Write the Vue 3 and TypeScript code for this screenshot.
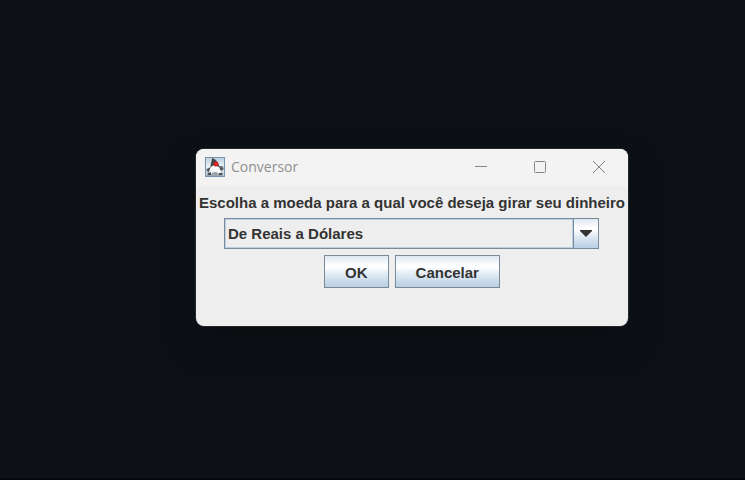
<script setup lang="ts">
import { ref } from 'vue'

const options: string[] = ['De Reais a Dólares']
const selected = ref<string>(options[0])
</script>

<template>
  <main class="desktop">
    <section class="window" role="dialog" aria-labelledby="window-title">
      <header class="titlebar">
        <svg class="app-icon" viewBox="0 0 20 20" aria-hidden="true">
          <defs>
            <linearGradient id="icon-sky" x1="0" y1="0" x2="0" y2="1">
              <stop offset="0" stop-color="#b9cfdf" />
              <stop offset="0.5" stop-color="#f0f4f7" />
              <stop offset="1" stop-color="#b4c5d2" />
            </linearGradient>
          </defs>
          <rect x="0.5" y="0.5" width="19" height="19" fill="url(#icon-sky)" stroke="#7895ad" />
          <path d="M2 16q8-3 16 0v3H2z" fill="#9aa6af" />
          <path d="M6 10l-3 1-2 2 2 2 3-1zM14 9l4 0 1 3-2 2-3-1z" fill="#7d868d" />
          <path d="M2 12l3-1 1 2-3 2zM15 10l3 1-1 2-2 0z" fill="#4c5257" />
          <path d="M7 1q4 1 6 5 2 4 2 6l-4-2-5 1q-1-2 0-5 1-3 1-5z" fill="#42474b" />
          <path d="M7 9l3-1 4 2q2 3 2 7-2 1-3-1-3-2-6 0-1 2-3 1 0-5 3-8z" fill="#f8f9fa" />
          <path d="M3 16l3-1 0 3H3zM14 16l3 0v2h-3z" fill="#4a5157" />
          <circle cx="11" cy="7" r="2.5" fill="#c9202a" />
          <circle cx="11" cy="7" r="1.5" fill="#f02a2a" />
        </svg>
        <h1 id="window-title" class="title">Conversor</h1>
        <div class="controls">
          <button type="button" class="control" aria-label="Minimizar">
            <svg viewBox="0 0 12 12"><path d="M0 5.5H12" /></svg>
          </button>
          <button type="button" class="control" aria-label="Maximizar">
            <svg viewBox="0 0 12 12"><rect x="0.5" y="0.5" width="11" height="11" rx="1" /></svg>
          </button>
          <button type="button" class="control" aria-label="Fechar">
            <svg viewBox="0 0 12 12"><path d="M0 0L12 12M12 0L0 12" /></svg>
          </button>
        </div>
      </header>
      <form class="content" @submit.prevent>
        <label class="message" for="currency">Escolha a moeda para a qual você deseja girar seu dinheiro</label>
        <div class="combo">
          <select id="currency" v-model="selected" class="select">
            <option v-for="option in options" :key="option" :value="option">{{ option }}</option>
          </select>
          <span class="arrow" aria-hidden="true">
            <svg viewBox="0 0 12 7"><path d="M0 0H12V1L6 7L0 1Z" /></svg>
          </span>
        </div>
        <div class="actions">
          <button type="submit" class="button">OK</button>
          <button type="button" class="button">Cancelar</button>
        </div>
      </form>
    </section>
  </main>
</template>

<style>
body {
  background: #0d1017;
}
</style>

<style scoped>
.desktop {
  position: relative;
  box-sizing: border-box;
  min-height: 100vh;
  background: #0d1017;
  border-bottom: 2px solid #08060d;
  overflow: hidden;
}

.window {
  position: absolute;
  left: 196px;
  top: 149px;
  border-radius: 8px;
  background: #eeeeee;
  box-shadow: 0 0 0 1px #25262b, 0 16px 32px rgba(10, 14, 15, 0.8);
  overflow: hidden;
}

.titlebar {
  display: flex;
  align-items: center;
  height: 36px;
  padding: 0 0 1px 9px;
  background: #f3f3f3;
}

.app-icon {
  width: 20px;
  height: 20px;
}

.title {
  margin: 0 0 0 6px;
  color: #8f8f8f;
  font: 400 14px/20px "Open Sans", "Noto Sans", sans-serif;
}

.controls {
  display: flex;
  align-self: stretch;
  margin-left: auto;
}

.control {
  display: flex;
  align-items: center;
  justify-content: center;
  width: 59px;
  padding: 0;
  border: 0;
  background: transparent;
}

.control svg {
  width: 12px;
  height: 12px;
  fill: none;
  stroke: #858585;
  stroke-width: 1;
  overflow: visible;
}

.content {
  display: flex;
  flex-direction: column;
  align-items: center;
  gap: 5px;
  padding: 7px 3px 38px;
  color: #333333;
  font: 700 15px/20px "Liberation Sans", Arial, sans-serif;
}

.message {
  white-space: nowrap;
}

.combo {
  display: grid;
  grid-template-columns: 1fr 25px;
  align-self: stretch;
  height: 31px;
  margin: 0 26px 1px 25px;
  box-sizing: border-box;
  border: 1px solid #7a8a99;
}

.select {
  grid-area: 1 / 1 / 2 / 3;
  appearance: none;
  width: 100%;
  margin: 0;
  padding: 0 25px 0 2px;
  border: 1px solid #b8cfe5;
  border-radius: 0;
  background: #eeeeee;
  color: inherit;
  font: inherit;
}

.arrow {
  grid-area: 1 / 2 / 2 / 3;
  z-index: 1;
  display: flex;
  align-items: center;
  justify-content: center;
  border-left: 1px solid #7a8a99;
  background: linear-gradient(#dde8f3 0%, #ffffff 30%, #ffffff 36%, #dde8f3 62%, #b8cfe5 100%);
  box-shadow: -1px 0 #b8cfe5;
  pointer-events: none;
}

.arrow svg {
  width: 12px;
  height: 7px;
  fill: #333333;
}

.actions {
  display: flex;
  gap: 6px;
}

.button {
  height: 33px;
  padding: 2px 20px 0;
  border: 1px solid #7a8a99;
  border-radius: 0;
  background: linear-gradient(#dde8f3 0%, #ffffff 30%, #ffffff 36%, #dde8f3 62%, #b8cfe5 100%);
  color: inherit;
  font: inherit;
}
</style>
